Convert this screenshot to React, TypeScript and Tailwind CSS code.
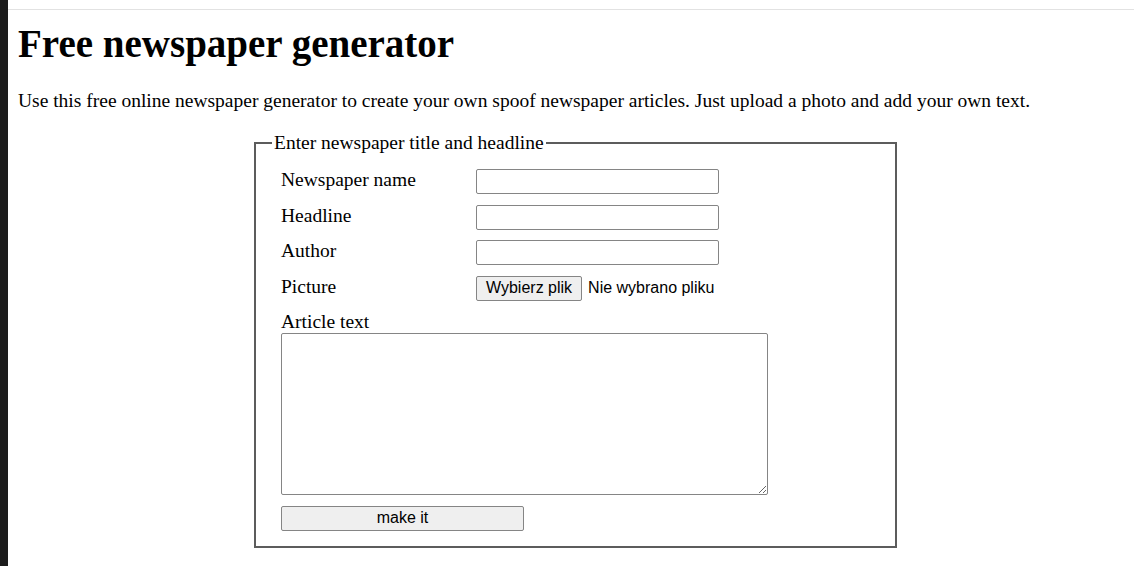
export default function App() {
  const fields = ["Newspaper name", "Headline", "Author"];

  return (
    <div className="flex min-h-[566px] bg-white text-black font-['Liberation_Serif',serif]">
      {/* dark edge on the left */}
      <div className="w-[8px] shrink-0 bg-[#1c1c1c]" />

      <div className="flex-1 flex flex-col">
        <div className="h-[10px] border-b border-[#e2e2e2]" />

        <main className="px-[10px] pt-[12px]">
          <h1 className="text-[39px] leading-[44px] font-bold">Free newspaper generator</h1>

          <p className="mt-[24px] text-[19.5px] leading-[22px]">
            Use this free online newspaper generator to create your own spoof newspaper articles. Just upload a photo and add your own text.
          </p>

          <fieldset className="ml-[236px] mt-[20px] w-[643px] border-2 border-[#5c5c5c] pl-[16px] pr-[16px] pt-[15px] pb-[15px] text-[19.5px]">
            <legend className="px-[2px] leading-[22px]">Enter newspaper title and headline</legend>

            <div className="pl-[9px] flex flex-col">
              <div className="flex flex-col gap-[10.5px]">
                {fields.map((f) => (
                  <div key={f} className="flex items-start">
                    <label className="w-[195px] leading-[22px]">{f}</label>
                    <input
                      type="text"
                      className="w-[243px] h-[25px] border border-[#858585] rounded-[2px] bg-white"
                    />
                  </div>
                ))}
                <div className="flex items-start">
                  <label className="w-[195px] leading-[22px]">Picture</label>
                  <div className="flex items-center gap-[6px] font-['Liberation_Sans',Arial,sans-serif] text-[16px]">
                    <button className="h-[25px] px-[9px] border border-[#858585] rounded-[2px] bg-[#efefef] leading-none">
                      Wybierz plik
                    </button>
                    <span>Nie wybrano pliku</span>
                  </div>
                </div>
                <label className="leading-[22px]">Article text</label>
              </div>

              <textarea className="w-[487px] h-[162px] border border-[#858585] rounded-[2px] bg-white" />

              <button className="mt-[10.5px] w-[243px] h-[25px] border border-[#858585] rounded-[2px] bg-[#efefef] font-['Liberation_Sans',Arial,sans-serif] text-[16px] leading-none">
                make it
              </button>
            </div>
          </fieldset>
        </main>
      </div>
    </div>
  );
}
